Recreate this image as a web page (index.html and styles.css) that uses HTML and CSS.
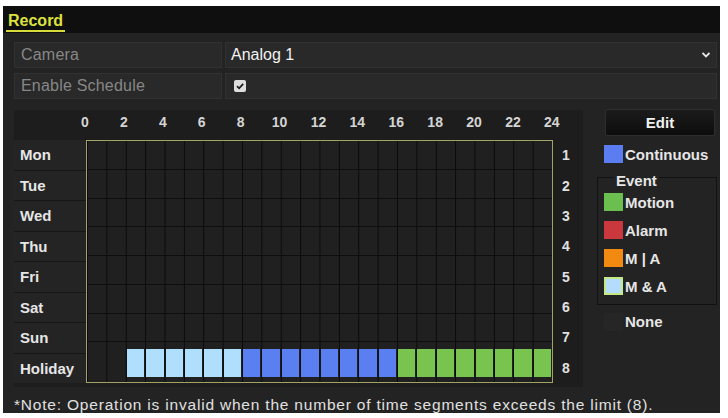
FILE: index.html
```html
<!DOCTYPE html>
<html lang="en">
<head>
    <meta charset="UTF-8">
    <title>Record</title>
    <link rel="stylesheet" href="styles.css">
</head>
<body>
    <div class="screen">
        <div class="title-bar">
            <span class="tab">Record</span>
        </div>
        <div class="content">
            <div class="form-row">
                <div class="label-cell">Camera</div>
                <div class="value-cell select">
                    <span>Analog 1</span>
                    <svg class="caret" width="8" height="6" viewBox="0 0 8 6"><path d="M0.5 1 L4 4.5 L7.5 1" fill="none" stroke="#e8e8e8" stroke-width="1.8"/></svg>
                </div>
            </div>
            <div class="form-row">
                <div class="label-cell">Enable Schedule</div>
                <div class="value-cell">
                    <span class="checkbox">
                        <svg width="12" height="12" viewBox="0 0 12 12"><path d="M3 6.2 L5.1 8.3 L9.2 3.8" fill="none" stroke="#1e1e1e" stroke-width="1.8"/></svg>
                    </span>
                </div>
            </div>

            <div class="schedule">
                <div class="grid-panel">
                    <div class="hours">
                        <span>0</span><span>2</span><span>4</span><span>6</span><span>8</span><span>10</span><span>12</span>
                        <span>14</span><span>16</span><span>18</span><span>20</span><span>22</span><span>24</span>
                    </div>
                    <div class="grid-body">
                        <div class="days">
                            <div class="day">Mon</div>
                            <div class="day">Tue</div>
                            <div class="day">Wed</div>
                            <div class="day">Thu</div>
                            <div class="day">Fri</div>
                            <div class="day">Sat</div>
                            <div class="day">Sun</div>
                            <div class="day">Holiday</div>
                        </div>
                        <div class="track">
                            <div class="track-row"></div>
                            <div class="track-row"></div>
                            <div class="track-row"></div>
                            <div class="track-row"></div>
                            <div class="track-row"></div>
                            <div class="track-row"></div>
                            <div class="track-row"></div>
                            <div class="track-row holiday">
                                <span></span><span></span>
                                <span class="seg ma"></span><span class="seg ma"></span><span class="seg ma"></span>
                                <span class="seg ma"></span><span class="seg ma"></span><span class="seg ma"></span>
                                <span class="seg cont"></span><span class="seg cont"></span><span class="seg cont"></span><span class="seg cont"></span>
                                <span class="seg cont"></span><span class="seg cont"></span><span class="seg cont"></span><span class="seg cont"></span>
                                <span class="seg motion"></span><span class="seg motion"></span><span class="seg motion"></span><span class="seg motion"></span>
                                <span class="seg motion"></span><span class="seg motion"></span><span class="seg motion"></span><span class="seg motion"></span>
                            </div>
                        </div>
                        <div class="nums">
                            <div class="num">1</div>
                            <div class="num">2</div>
                            <div class="num">3</div>
                            <div class="num">4</div>
                            <div class="num">5</div>
                            <div class="num">6</div>
                            <div class="num">7</div>
                            <div class="num">8</div>
                        </div>
                    </div>
                </div>

                <div class="legend">
                    <div class="edit-btn">Edit</div>
                    <div class="legend-item">
                        <span class="swatch cont"></span>Continuous
                    </div>
                    <fieldset class="event-box">
                        <legend>Event</legend>
                        <div class="legend-item"><span class="swatch motion"></span>Motion</div>
                        <div class="legend-item"><span class="swatch alarm"></span>Alarm</div>
                        <div class="legend-item"><span class="swatch mora"></span>M | A</div>
                        <div class="legend-item"><span class="swatch ma"></span>M &amp; A</div>
                    </fieldset>
                    <div class="legend-item none">
                        <span class="swatch blank"></span>None
                    </div>
                </div>
            </div>

            <div class="note">*Note: Operation is invalid when the number of time segments exceeds the limit (8).</div>
        </div>
    </div>
</body>
</html>
```

FILE: styles.css
```css
body {
    margin: 0;
    padding: 0;
    background: #fff;
    font-family: 'Liberation Sans', Arial, sans-serif;
}
.screen {
    margin: 6px 0 0 3px;
    width: 717px;
    height: 407px;
    overflow: hidden;
    background: #232323;
    color: #e4e4e4;
}
.title-bar {
    height: 27px;
    box-sizing: border-box;
    background: #0f0f0f;
    padding: 6px 0 0 3px;
}
.tab {
    display: inline-block;
    color: #dde23c;
    font-size: 16px;
    font-weight: bold;
    line-height: 16px;
    padding: 0 2px 1px;
    border-bottom: 2px solid #d6da3a;
}
.content {
    padding: 9px 3px 0 11px;
}
.form-row {
    display: flex;
    gap: 3px;
    height: 26px;
    margin-bottom: 5px;
}
.label-cell,
.value-cell {
    box-sizing: border-box;
    background: #292929;
    border: 1px solid #313131;
    line-height: 24px;
    font-size: 16px;
}
.label-cell {
    width: 208px;
    padding-left: 6px;
    color: #878787;
    letter-spacing: 0.2px;
}
.value-cell {
    flex: 1;
    padding-left: 5px;
    color: #f2f2f2;
    display: flex;
    align-items: center;
}
.select {
    justify-content: space-between;
    padding-right: 6px;
}
.checkbox {
    width: 12px;
    height: 12px;
    margin-left: 3px;
    background: #dedede;
    border-radius: 2px;
    display: flex;
}

/* schedule */
.schedule {
    display: flex;
    margin-top: 11px;
}
.grid-panel {
    width: 569px;
    background: #1d1d1d;
    padding-bottom: 4px;
}
.hours {
    height: 30px;
    line-height: 24px;
    margin-left: 61px;
    width: 487px;
    display: flex;
    justify-content: space-between;
    font-size: 14px;
    font-weight: bold;
    color: #d4d4d4;
}
.hours span {
    width: 20px;
    text-align: center;
}
.grid-body {
    display: flex;
    height: 243px;
}
.days {
    width: 72px;
    display: flex;
    flex-direction: column;
}
.day {
    flex: 1;
    display: flex;
    align-items: center;
    padding-left: 6px;
    background: #242424;
    border-bottom: 1px solid #161616;
    font-size: 15px;
    font-weight: bold;
    color: #e6e6e6;
}
.day:last-child {
    border-bottom: none;
}
.track {
    width: 467px;
    box-sizing: border-box;
    border: 1px solid #a3a368;
    background-color: #202020;
    background-image: linear-gradient(to right, #0a0a0a 0, #0a0a0a 1px, transparent 1px);
    background-size: calc(465px / 24) 100%;
    display: flex;
    flex-direction: column;
}
.track-row {
    flex: 1;
    border-bottom: 1px solid #0e0e0e;
}
.track-row:last-child {
    border-bottom: none;
}
.holiday {
    display: grid;
    grid-template-columns: repeat(24, 1fr);
    padding: 7px 0 5px;
}
.seg {
    margin: 0 1px 0 1px;
}
.seg.ma { background: #b0defd; }
.seg.cont { background: #5a7ff0; }
.seg.motion { background: #78c44e; }
.nums {
    flex: 1;
    display: flex;
    flex-direction: column;
}
.num {
    flex: 1;
    display: flex;
    align-items: center;
    padding-left: 9px;
    font-size: 14px;
    font-weight: bold;
    color: #e0e0e0;
}

/* legend */
.legend {
    width: 120px;
    margin-left: 14px;
    margin-top: -1px;
}
.edit-btn {
    margin-left: 8px;
    width: 110px;
    height: 27px;
    box-sizing: border-box;
    border: 1px solid #2e2e2e;
    border-radius: 2px;
    background: linear-gradient(#1b1b1b, #0d0d0d);
    text-align: center;
    line-height: 25px;
    font-size: 15px;
    font-weight: bold;
    color: #f0f0f0;
}
.legend-item {
    height: 28px;
    display: flex;
    align-items: center;
    padding-left: 7px;
    font-size: 15px;
    font-weight: bold;
    color: #e6e6e6;
}
.edit-btn + .legend-item {
    margin-top: 5px;
    height: 26px;
}
.swatch {
    width: 19px;
    height: 18px;
    margin-right: 2px;
    box-sizing: border-box;
}
.swatch.cont { background: #5a7ef2; }
.swatch.motion { background: #6abf4e; }
.swatch.alarm { background: #c8383c; }
.swatch.mora { background: #f28a12; }
.swatch.ma { background: #b4dcff; border: 2px solid #c4e884; }
.swatch.blank { background: #262626; }
.event-box {
    margin: 0;
    padding: 0 0 4px 6px;
    border: 1px solid #121212;
}
.event-box legend {
    margin-left: 10px;
    padding: 7px 2px 0;
    line-height: 14px;
    font-size: 15px;
    font-weight: bold;
    color: #e6e6e6;
}
.event-box .legend-item {
    padding-left: 0;
}
.legend-item.none {
    margin-top: 3px;
    height: 27px;
}

.note {
    margin-top: 9px;
    line-height: 18px;
    font-size: 15.5px;
    letter-spacing: 0.8px;
    color: #e0e0e0;
}
```
